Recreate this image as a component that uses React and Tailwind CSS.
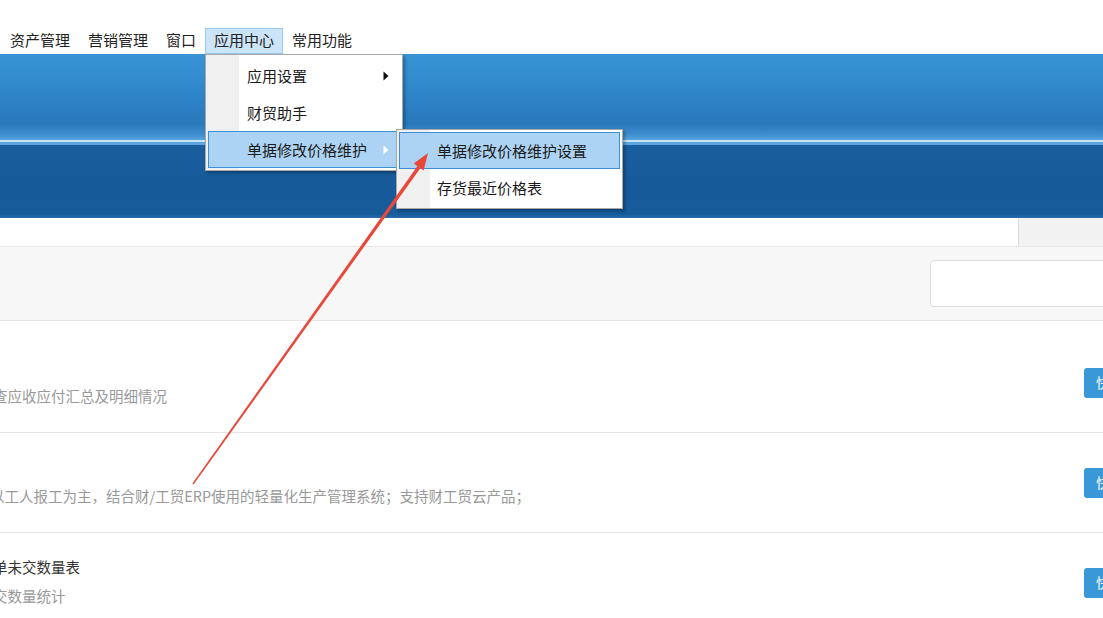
import React from 'react';

const topMenus = ['资产管理', '营销管理', '窗口', '应用中心', '常用功能'];

const rows = [
  { title: '', desc: '查应收应付汇总及明细情况', btn: '快速开始', shift: '-ml-[7px]' },
  { title: '', desc: '以工人报工为主，结合财/工贸ERP使用的轻量化生产管理系统；支持财工贸云产品；', btn: '快速开始', shift: '-ml-[10px]' },
  { title: '单未交数量表', desc: '交数量统计', btn: '快速开始', shift: '-ml-[7px]' },
];

function Caret({ white }) {
  return (
    <svg width="6" height="10" viewBox="0 0 6 10" className="shrink-0">
      <path d="M0.5 0.5 L5.5 5 L0.5 9.5 Z" fill={white ? '#ffffff' : '#111111'} />
    </svg>
  );
}

function MenuItem({ label, active, caret, textLeft }) {
  return (
    <div
      className={
        'flex h-[37px] items-center border pr-[10px] ' +
        (active ? 'bg-[#acd3f3] border-[#3e8fd8]' : 'border-transparent')
      }
    >
      <span className={textLeft + ' flex-1 pt-[2px]'}>{label}</span>
      {caret && <Caret white={active} />}
    </div>
  );
}

export default function App() {
  return (
    <div className="relative w-[1103px] h-[618px] overflow-hidden bg-white text-[#222] font-['Noto_Sans_CJK_SC',sans-serif]">
      <div className="h-[28px]" />

      {/* menu bar */}
      <nav className="flex h-[26px] pl-[1px] text-[15px] leading-none">
        {topMenus.map((m) => (
          <div
            key={m}
            className={
              'flex items-center border px-[8px] pb-[3px] ' +
              (m === '应用中心' ? 'bg-[#cce4f7] border-[#99c9ef]' : 'border-transparent')
            }
          >
            {m}
          </div>
        ))}
      </nav>

      {/* blue banner */}
      <div className="flex flex-col">
        <div className="h-[86px] bg-[linear-gradient(to_bottom,#3894d4_0%,#318acc_35%,#2a7cbf_70%,#2a79bb_82%,#3f8fcf_94%,#5aa4dd_100%)]" />
        <div className="h-[2px] bg-[#c8e4f7]" />
        <div className="h-[3px] bg-[#5ca6df]" />
        <div className="h-[73px] bg-[linear-gradient(to_bottom,#1a5e9e_0%,#165a99_50%,#175b9b_95%,#2a6dab_100%)]" />
      </div>

      {/* strip */}
      <div className="flex h-[28px]">
        <div className="flex-1" />
        <div className="w-[85px] border-l border-[#dcdcdc] bg-[#f2f2f2]" />
      </div>

      {/* filter area */}
      <div className="flex h-[75px] items-center justify-end border-y border-[#e6e6e6] bg-[#f7f7f7]">
        <div className="h-[47px] w-[200px] -mr-[27px] rounded-[4px] border border-[#dcdcdc] bg-white" />
      </div>

      {/* list */}
      <div className="pt-[12px]">
        {rows.map((r, i) => (
          <div key={i} className="flex h-[100px] items-center justify-between border-b border-[#e6e6e6]">
            <div className={r.shift + ' -mt-[3px] flex flex-col text-[14.5px] leading-[20px]'}>
              <div className="h-[20px] text-[#333]">{r.title}</div>
              <div className="mt-[9px] text-[#999]">{r.desc}</div>
            </div>
            <div className="-mr-[69px] flex h-[30px] w-[88px] items-center rounded-[3px] bg-[#3a97d8] pl-[12px] text-[14px] text-white">
              {r.btn}
            </div>
          </div>
        ))}
      </div>

      {/* dropdown menu */}
      <div className="absolute left-[205px] top-[54px] w-[198px] border border-[#a8a8a8] bg-[linear-gradient(to_right,#f0f0f0_33px,#ffffff_33px)] p-[2px] text-[15px] text-[#1a1a1a] shadow-[2px_2px_3px_rgba(0,0,0,0.3)]">
        <MenuItem label="应用设置" caret textLeft="pl-[38px]" />
        <MenuItem label="财贸助手" textLeft="pl-[38px]" />
        <MenuItem label="单据修改价格维护" caret active textLeft="pl-[38px]" />
      </div>

      {/* submenu */}
      <div className="absolute left-[396px] top-[129px] w-[227px] border border-[#a8a8a8] bg-[linear-gradient(to_right,#f0f0f0_33px,#ffffff_33px)] p-[2px] text-[15px] text-[#1a1a1a] shadow-[2px_2px_3px_rgba(0,0,0,0.3)]">
        <MenuItem label="单据修改价格维护设置" active textLeft="pl-[37px]" />
        <MenuItem label="存货最近价格表" textLeft="pl-[37px]" />
      </div>

      {/* red annotation arrow */}
      <svg className="pointer-events-none absolute left-0 top-0" width="1103" height="618" viewBox="0 0 1103 618">
        <polygon points="193.6,484.5 192.4,483.5 417.5,166 420.5,168" fill="#e8483a" />
        <polygon points="428,153 423.6,170.5 413.8,163.5" fill="#e8483a" />
      </svg>
    </div>
  );
}
